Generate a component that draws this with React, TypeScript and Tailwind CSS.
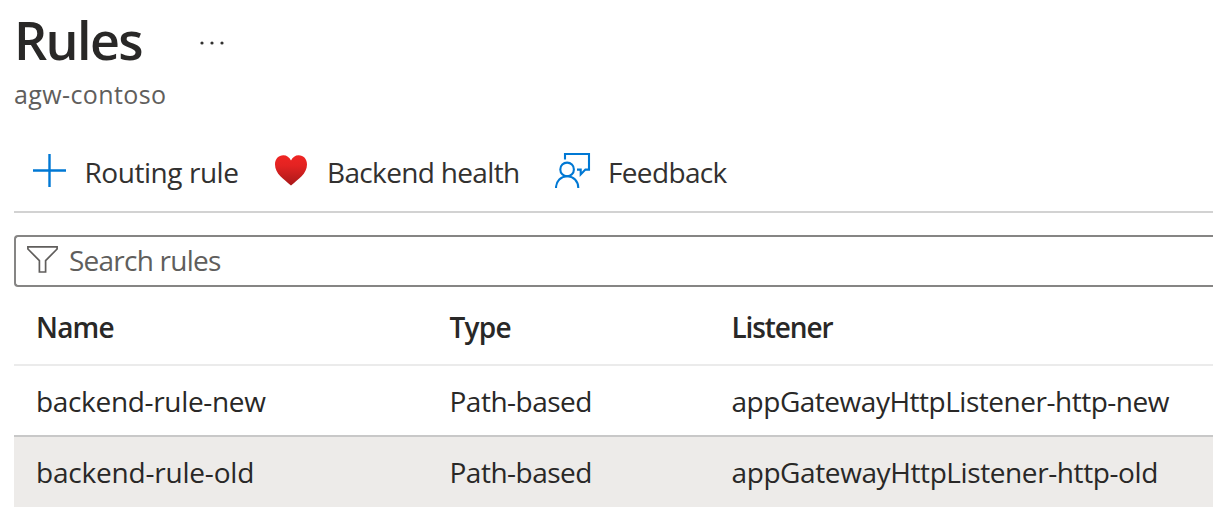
import type { ReactNode } from 'react';

function MoreIcon() {
  return (
    <svg width="26" height="6" viewBox="0 0 26 6" fill="#323130">
      <circle cx="3" cy="3" r="1.6" />
      <circle cx="13" cy="3" r="1.6" />
      <circle cx="23" cy="3" r="1.6" />
    </svg>
  );
}

function PlusIcon() {
  return (
    <svg width="33" height="33" viewBox="0 0 33 33" fill="none" stroke="#0078d4" strokeWidth="2.4">
      <path d="M16.5 0V33M0 16.5H33" />
    </svg>
  );
}

function HeartIcon() {
  return (
    <svg width="32" height="31" viewBox="0 0 32 31">
      <defs>
        <linearGradient id="heart" x1="0" y1="0" x2="0" y2="1">
          <stop offset="0" stopColor="#ef2523" />
          <stop offset="0.35" stopColor="#e32322" />
          <stop offset="1" stopColor="#a81819" />
        </linearGradient>
      </defs>
      <path
        d="M16 5.6C17.6 2.2 20.3 .2 23.6 .2C28.6 .2 32 4 32 9.4C32 14 29.8 17.8 26.6 21.2C23.6 24.4 19.6 27.2 16 30.6C12.4 27.2 8.4 24.4 5.4 21.2C2.2 17.8 0 14 0 9.4C0 4 3.4 .2 8.4 .2C11.7 .2 14.4 2.2 16 5.6Z"
        fill="url(#heart)"
      />
    </svg>
  );
}

function FeedbackIcon() {
  return (
    <svg width="36" height="35" viewBox="0 0 36 35" fill="none" stroke="#0078d4" strokeWidth="2.1">
      <path d="M10 6.4V1H34V16.6H30.4L25.7 21.4V16.6H22" />
      <circle cx="12.1" cy="16.4" r="6.8" />
      <path d="M1 35C1 28.2 6 23.2 12.2 23.2C18.4 23.2 23.3 28.2 23.3 35" />
    </svg>
  );
}

function FilterIcon() {
  return (
    <svg className="mb-[3px]" width="31" height="27" viewBox="0 0 31 27" fill="none" stroke="#605e5c" strokeWidth="1.7">
      <path d="M.9 .9H30.1V3L18.6 14.6V26H12.4V14.6L.9 3Z" />
    </svg>
  );
}

function Command({ icon, className, children }: { icon: ReactNode; className: string; children: ReactNode }) {
  return (
    <button className={`flex h-10 items-center leading-10 whitespace-nowrap ${className}`}>
      <span className="mb-[3px]">{icon}</span>
      <span>{children}</span>
    </button>
  );
}

const COLUMNS = 'grid grid-cols-[413.5px_282px_1fr] pl-[22px] whitespace-nowrap';

export default function App() {
  return (
    <main className="h-[528px] w-full overflow-hidden bg-white pl-3.5 pt-2.5 font-['Open_Sans','Noto_Sans',sans-serif] text-[28px] text-[#292827]">
      <header>
        <div className="flex h-[60px] items-center">
          <h1 className="w-[185px] text-[52px] leading-[60px] font-semibold tracking-[-1.6px]">Rules</h1>
          <button aria-label="More" className="pt-1.5">
            <MoreIcon />
          </button>
        </div>
        <p className="mt-2 text-[25px] leading-8 tracking-[0.4px] text-[#605e5c]">agw-contoso</p>
      </header>

      <nav className="mt-[42px] flex h-[61px] border-b-2 border-[#d2d2d2] pl-[19px] text-[#323130]">
        <Command className="w-[242px] gap-[18.5px] tracking-[-0.45px]" icon={<PlusIcon />}>Routing rule</Command>
        <Command className="w-[280px] gap-5 tracking-[-0.66px]" icon={<HeartIcon />}>Backend health</Command>
        <Command className="gap-[17px] tracking-[-0.65px]" icon={<FeedbackIcon />}>Feedback</Command>
      </nav>

      <div className="mt-[22px] flex h-[52px] items-center gap-[11px] rounded-l-[4px] border-2 border-r-0 border-[#868584] pl-[11px] text-[#605e5c]">
        <FilterIcon />
        <span className="pb-0.5 leading-10 tracking-[-0.76px]">Search rules</span>
      </div>

      <section>
        <div className={`${COLUMNS} h-[79px] border-b-2 border-[#ebebeb] pt-[3px] font-semibold leading-[74px]`}>
          <span className="tracking-[-0.8px]">Name</span>
          <span className="tracking-[-0.75px]">Type</span>
          <span className="tracking-[-1.1px]">Listener</span>
        </div>
        <div className={`${COLUMNS} h-[71px] border-b-2 border-[#c8c8c8] leading-[70px]`}>
          <span className="tracking-[-0.33px]">backend-rule-new</span>
          <span className="tracking-[-0.5px]">Path-based</span>
          <span className="tracking-[-0.48px]">appGatewayHttpListener-http-new</span>
        </div>
        <div className={`${COLUMNS} h-[70px] bg-[#edebe9] leading-[70px]`}>
          <span className="tracking-[-0.2px]">backend-rule-old</span>
          <span className="tracking-[-0.5px]">Path-based</span>
          <span className="tracking-[-0.4px]">appGatewayHttpListener-http-old</span>
        </div>
      </section>
    </main>
  );
}
